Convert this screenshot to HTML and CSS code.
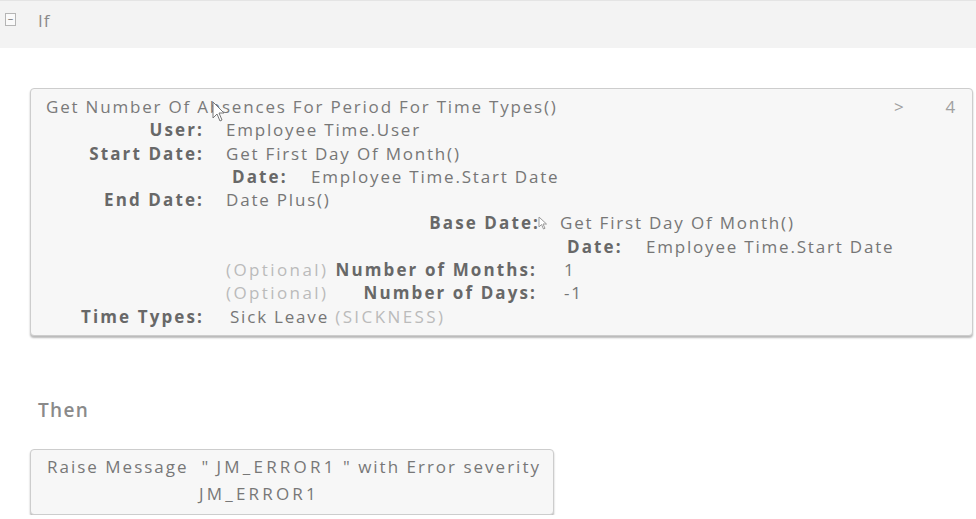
FILE: index.html
```html
<!DOCTYPE html>
<html lang="en">
<head>
    <meta charset="UTF-8">
    <title>Business Rule</title>
    <link rel="stylesheet" href="styles.css">
</head>
<body>
    <div class="if-bar">
        <span class="toggle">&minus;</span>
        <span class="if-label">If</span>
    </div>

    <div class="section">
        <div class="box cond">
            <div class="title-row">
                <span class="title">Get Number Of Absences For Period For Time Types()</span>
                <span class="nav">&gt;</span>
                <span class="count">4</span>
            </div>
            <div class="row">
                <span class="lbl w1">User:</span>
                <span class="val">Employee Time.User</span>
            </div>
            <div class="row">
                <span class="lbl w1">Start Date:</span>
                <span class="val">Get First Day Of Month()</span>
            </div>
            <div class="row nest1">
                <span class="lbl w2">Date:</span>
                <span class="val v2">Employee Time.Start Date</span>
            </div>
            <div class="row">
                <span class="lbl w1">End Date:</span>
                <span class="val">Date Plus()</span>
            </div>
            <div class="row nest1">
                <span class="lbl w3">Base Date:</span>
                <span class="val v3">Get First Day Of Month()</span>
            </div>
            <div class="row nest2">
                <span class="lbl w2">Date:</span>
                <span class="val v2">Employee Time.Start Date</span>
            </div>
            <div class="row nest-opt">
                <span class="lbl w4 opt-lbl"><span class="opt">(Optional)</span>Number of Months:</span>
                <span class="val v4">1</span>
            </div>
            <div class="row nest-opt">
                <span class="lbl w4 opt-lbl"><span class="opt">(Optional)</span>Number of Days:</span>
                <span class="val v4">-1</span>
            </div>
            <div class="row">
                <span class="lbl w1">Time Types:</span>
                <span class="val v5">Sick Leave <span class="opt">(SICKNESS)</span></span>
            </div>

            <!-- mouse pointers caught in the screenshot -->
            <svg class="pointer p1" width="14" height="22" viewBox="0 0 14 22">
                <path d="M1 1 L1 17 L5 13 L8 20 L10 19 L7 12 L12 12 Z" fill="#fff" stroke="#777" stroke-width="1"/>
            </svg>
            <svg class="pointer p2" width="10" height="14" viewBox="0 0 10 14">
                <path d="M1 1 L1 11 L3.5 8.5 L5.5 13 L7 12.3 L5 8 L8.5 8 Z" fill="#fff" stroke="#999" stroke-width="1"/>
            </svg>
        </div>

        <div class="then">Then</div>

        <div class="box action">
            <div class="msg">Raise Message &nbsp;"&nbsp;<span class="code">JM_ERROR1</span>&nbsp;" with Error severity</div>
            <div class="msg-code"><span class="code">JM_ERROR1</span></div>
        </div>
    </div>
</body>
</html>
```

FILE: styles.css
```css
body {
  margin: 0;
  padding: 0;
  background-color: #fff;
  font-family: "Open Sans", sans-serif;
  font-size: 17px;
  letter-spacing: 1.8px;
  color: #737373;
}
.if-bar {
  height: 48px;
  background-color: #f3f3f3;
  border-top: 1px solid #e4e4e4;
  display: flex;
  align-items: flex-start;
  padding: 8px 0 0 5px;
  box-sizing: border-box;
}
.toggle {
  width: 9px;
  height: 11px;
  border: 1px solid #b5b5b5;
  background-color: #fafafa;
  font-size: 10px;
  line-height: 10px;
  letter-spacing: 0;
  text-align: center;
  color: #666;
  margin-top: 4px;
}
.if-label {
  margin-left: 22px;
  font-size: 17px;
  letter-spacing: 1px;
  color: #8a8a8a;
}
.section {
  padding: 40px 3px 0 30px;
}
.box {
  background-color: #f7f7f7;
  border: 1px solid #cdcdcd;
  border-radius: 4px;
  box-shadow: 0 2px 2px rgba(0, 0, 0, 0.28);
}
.cond {
  position: relative;
  padding: 6px 15px 7px 15px;
  line-height: 23.3px;
}
.title-row {
  display: flex;
}
.title {
  flex: 1;
  color: #7a7a7a;
}
.nav {
  margin-right: 40px;
  color: #a0a0a0;
}
.count {
  color: #a0a0a0;
}
.row {
  display: flex;
  white-space: nowrap;
}
.lbl {
  text-align: right;
  font-weight: 700;
  letter-spacing: 2.1px;
  color: #686868;
  flex-shrink: 0;
}
.w1 {
  width: 158px;
}
.w2 {
  width: 79px;
  text-align: left;
}
.w3 {
  width: 308px;
}
.w4 {
  width: 311px;
}
.val {
  margin-left: 22px;
  color: #767676;
}
.v2 {
  margin-left: 0;
}
.v3 {
  margin-left: 20px;
}
.v4 {
  margin-left: 27px;
}
.v5 {
  margin-left: 26px;
}
.nest1 {
  margin-left: 186px;
}
.nest2 {
  margin-left: 521px;
}
.nest-opt {
  margin-left: 180px;
}
.opt-lbl {
  display: flex;
  justify-content: space-between;
}
.opt {
  font-weight: normal;
  letter-spacing: 2.4px;
  color: #bbbbbb;
}
.pointer {
  position: absolute;
}
.p1 {
  left: 181px;
  top: 12px;
}
.p2 {
  left: 507px;
  top: 127px;
}
.then {
  margin: 62px 0 0 8px;
  color: #8a8a8a;
  font-size: 19px;
  font-weight: 600;
  letter-spacing: 1.3px;
  line-height: 24px;
}
.action {
  width: 506px;
  margin-top: 27px;
  padding: 3px 8px 7px 8px;
  line-height: 27px;
  color: #777;
}
.msg {
  padding-left: 8px;
  white-space: nowrap;
  letter-spacing: 2px;
}
.code {
  letter-spacing: 3.2px;
}
.msg-code {
  padding-left: 160px;
}
```
